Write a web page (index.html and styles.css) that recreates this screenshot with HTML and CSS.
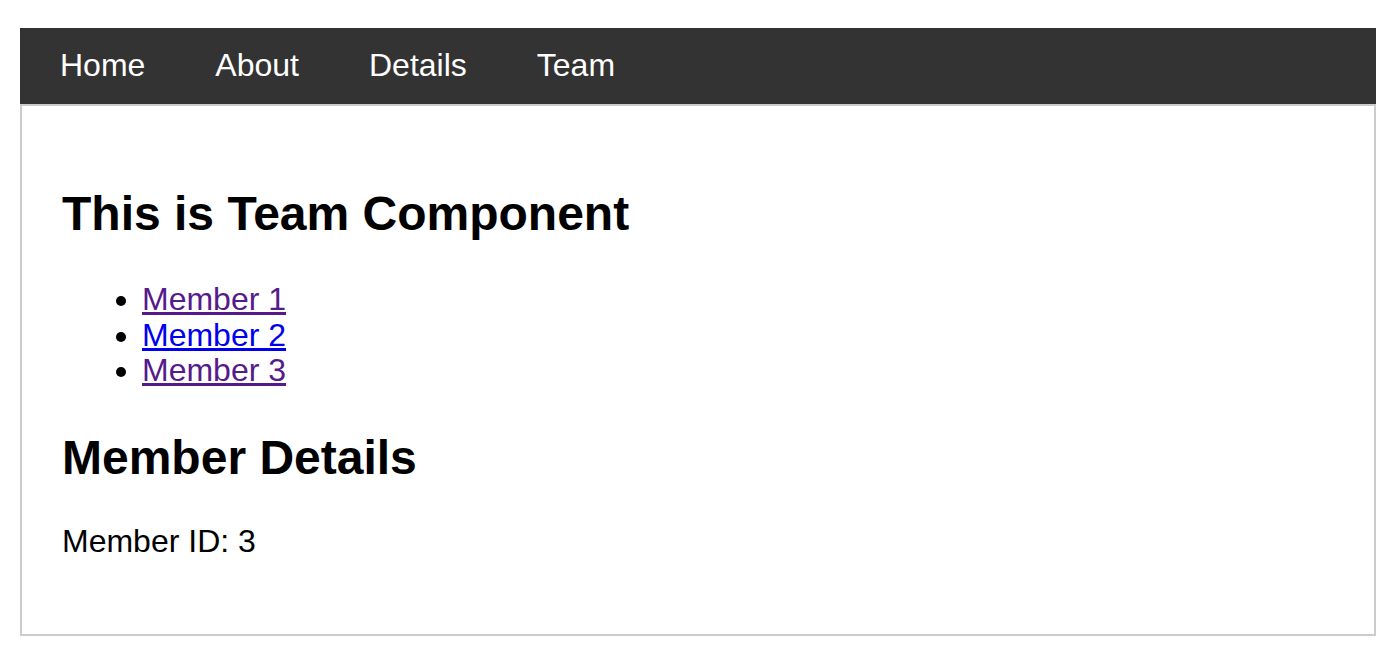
FILE: index.html
```html
<!DOCTYPE html>
<html lang="en">
<head>
<meta charset="utf-8">
<title>Team</title>
<link rel="stylesheet" href="styles.css">
</head>
<body>
<div class="app">
  <nav class="navbar">
    <a class="nav-link" href="#">Home</a>
    <a class="nav-link" href="#">About</a>
    <a class="nav-link" href="#">Details</a>
    <a class="nav-link" href="#">Team</a>
  </nav>
  <main class="content">
    <h2 class="title">This is Team Component</h2>
    <ul class="members">
      <li><a class="member visited" href="#">Member 1</a></li>
      <li><a class="member" href="#">Member 2</a></li>
      <li><a class="member visited" href="#">Member 3</a></li>
    </ul>
    <h2 class="title details-title">Member Details</h2>
    <p class="detail">Member ID: 3</p>
  </main>
</div>
</body>
</html>
```

FILE: styles.css
```css
html, body {
  margin: 0;
  padding: 0;
  background: #fff;
}

body {
  font-family: "Liberation Sans", Arial, Helvetica, sans-serif;
  font-size: 32px;
  color: #000;
}

.app {
  margin: 28px 12px 0 20px;
}

.navbar {
  display: flex;
  align-items: center;
  box-sizing: border-box;
  height: 76px;
  background: #333333;
  padding: 0 0 2px 40px;
  gap: 70px;
}

.nav-link {
  color: #fff;
  text-decoration: none;
  font-size: 32px;
}

.content {
  border: 2px solid #cccccc;
  padding: 40px 40px 42px 40px;
}

.title {
  font-size: 48px;
  font-weight: bold;
  margin: 40px 0;
}

.details-title {
  margin: 41px 0 38px;
}

.members {
  margin: 32px 0;
  padding: 1px 0 0 80px;
  list-style: disc;
  line-height: 35.5px;
}

.member {
  color: #0000ee;
  text-decoration: underline;
}

.member.visited {
  color: #551a8b;
}

.detail {
  margin: 29px 0 32px;
}
```
